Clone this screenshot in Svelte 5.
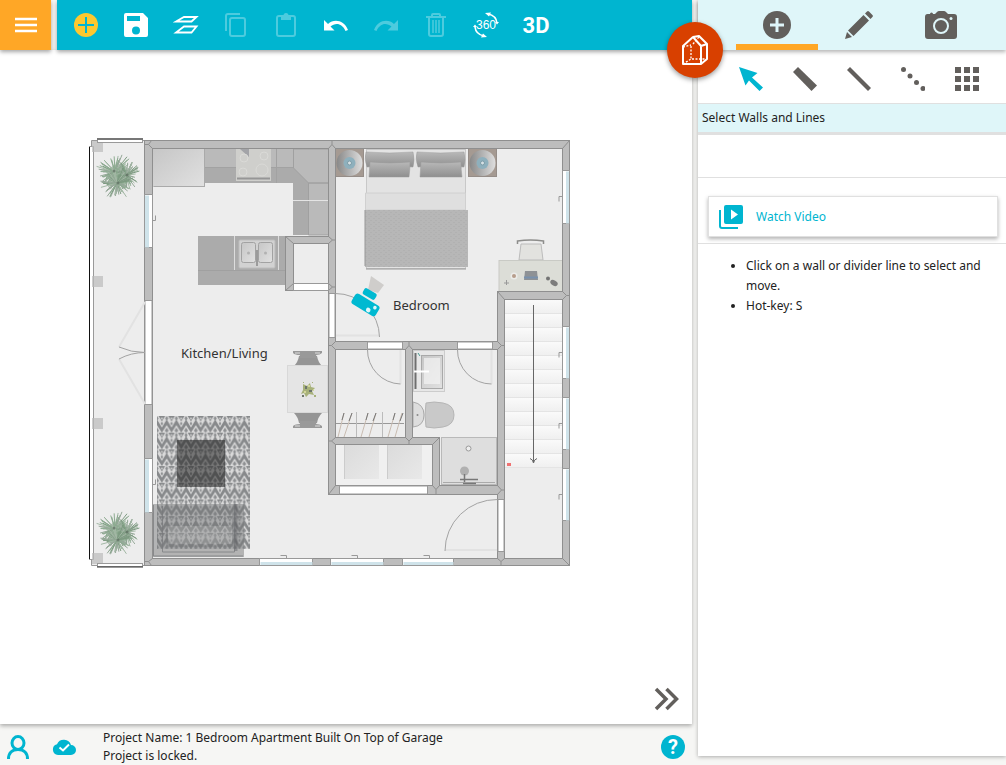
<script>
  let activeTab = $state('add');
  let activeTool = $state('select');

  const tools = [
    { id: 'select', label: 'Select Walls and Lines' },
    { id: 'wall', label: 'Draw Walls' },
    { id: 'divider', label: 'Draw Divider Lines' },
    { id: 'dots', label: 'Draw Dotted Lines' },
    { id: 'grid', label: 'Surfaces' }
  ];

  // walls as [x, y, width, height]
  const walls = [
    [144.5, 140.5, 425, 8],
    [144.5, 558.5, 425, 7],
    [144.5, 140.5, 8, 425],
    [562.5, 140.5, 7, 425],
    [328.5, 140.5, 7, 353],
    [285.5, 236.5, 50, 7],
    [285.5, 236.5, 8, 54],
    [328.5, 341.5, 176, 8],
    [405.5, 341.5, 7, 103],
    [497.5, 291.5, 72, 8],
    [497.5, 291.5, 7, 274],
    [328.5, 437.5, 111, 7],
    [432.5, 437.5, 7, 57],
    [328.5, 485.5, 176, 9]
  ];

  const openings = [
    [145, 300.5, 7, 104],
    [293.5, 283.5, 35, 7],
    [329, 293.5, 6, 44],
    [367.5, 342, 35, 7],
    [457.5, 342, 35, 7],
    [498, 499.5, 6, 52],
    [339.5, 486, 88, 8]
  ];

  const joints = [
    'M328.5 148.5l3.5-4 3.5 4M332 144.5v-4',
    'M144.5 144.5h4l4 4M148.5 144.5l3-4',
    'M144.5 561.5h4l4-3M148.5 561.5l3 4',
    'M562.5 148.5l7-8M562.5 558.5l7 7',
    'M285.5 236.5l8 7M285.5 290.5l8-7',
    'M328.5 236.5l4 3.5-4 3.5M332.5 240h3',
    'M328.5 283.5l4 3.5-4 3.5M332.5 287h3',
    'M335.5 341.5l-4 4 4 4M328.5 345.5h3',
    'M405.5 349.5l3.5-4 3.5 4M409 345.5v-4',
    'M497.5 341.5l4 4-4 4M501.5 345.5h3',
    'M497.5 291.5l7 8M562.5 291.5l4 4-4 4M566.5 295.5h3',
    'M335.5 437.5l-4 3.5 4 3.5M331.5 441h-3',
    'M405.5 437.5l3.5 3.5 3.5-3.5M409 441v3.5',
    'M432.5 444.5l7-7M328.5 494.5l7-9',
    'M432.5 485.5l3.5 4 3.5-4M436 489.5v5',
    'M497.5 485.5l4 4.5-4 4.5M501.5 490h3',
    'M497.5 558.5l3.5 3 3.5-3M501 561.5v4'
  ];

  // windows: orientation decides on which half the glass tint lies
  const windows = [
    { x: 144.5, y: 194.5, w: 8, h: 53, side: 'left' },
    { x: 144.5, y: 458.5, w: 8, h: 54, side: 'left' },
    { x: 562.5, y: 170.5, w: 7, h: 53, side: 'right' },
    { x: 562.5, y: 326.5, w: 7, h: 52, side: 'right' },
    { x: 562.5, y: 397.5, w: 7, h: 52, side: 'right' },
    { x: 562.5, y: 468.5, w: 7, h: 52, side: 'right' },
    { x: 259.5, y: 558.5, w: 53, h: 7, side: 'bottom' },
    { x: 330.5, y: 558.5, w: 53, h: 7, side: 'bottom' },
    { x: 402.5, y: 558.5, w: 51, h: 7, side: 'bottom' }
  ];

  const steps = Array.from({ length: 12 }, (_, i) => 300 + i * 14);
  const posts = [141, 276, 418, 553];
  const plants = [[118, 175], [118, 532]];
  const lamps = [335.5, 468.5];

  // repeatable pseudo random so the plants look the same on every load
  const rnd = (n) => {
    const v = Math.sin(n * 127.1) * 43758.5453;
    return v - Math.floor(v);
  };

  const leaves = [];
  [[-3, -3, 20], [8, 0, 15], [-1, 8, 17]].forEach(([cx, cy, len], c) => {
    for (let i = 0; i < 64; i++) {
      const k = c * 100 + i;
      const a = (i / 64) * Math.PI * 2 + rnd(k);
      const r = len * (0.5 + rnd(k + 500) * 0.5);
      leaves.push({
        x1: cx,
        y1: cy,
        x2: cx + Math.cos(a) * r,
        y2: cy + Math.sin(a) * r,
        tone: ['#8cab90', '#7c9a80', '#a3b8a5', '#95a898'][Math.floor(rnd(k + 900) * 4)]
      });
    }
  });
</script>

<div class="app">
  <main class="editor">
    <header class="top">
      <button class="menu" aria-label="Menu">
        <svg width="22" height="16" viewBox="0 0 22 16"><path d="M0 2h22M0 8h22M0 14h22" stroke="#fff" stroke-width="2.4" /></svg>
      </button>
      <nav class="toolbar">
        <button aria-label="Add">
          <svg width="24" height="24" viewBox="0 0 24 24"><circle cx="12" cy="12" r="12" fill="#fdc82f" /><path d="M12 4v16M4 12h16" stroke="#00b5d0" stroke-width="2" /></svg>
        </button>
        <button aria-label="Save">
          <svg width="24" height="24" viewBox="0 0 24 24"><path fill="#fff" fill-rule="evenodd" d="M2 0h17l5 5v17a2 2 0 0 1-2 2H2a2 2 0 0 1-2-2V2a2 2 0 0 1 2-2zM3 3v5h13V3zM12 13.500a4 4 0 1 0 0 8 4 4 0 0 0 0-8z" /></svg>
        </button>
        <button aria-label="Levels">
          <svg width="26" height="20" viewBox="0 0 26 20" fill="none" stroke="#fff" stroke-width="1.800"><path d="M11 2h12.500l-5 4.500H3zM11 11.500h12.500l-5 6H3z" /></svg>
        </button>
        <button aria-label="Copy" disabled>
          <svg width="24" height="24" viewBox="0 0 24 24" fill="none" stroke="#fff" stroke-width="2"><path d="M2 18V3a2 2 0 0 1 2-2h12" /><rect x="6" y="5" width="15" height="18" rx="2" /></svg>
        </button>
        <button aria-label="Paste" disabled>
          <svg width="24" height="24" viewBox="0 0 24 24" fill="none" stroke="#fff" stroke-width="2"><rect x="3" y="3" width="18" height="20" rx="2" /><path d="M8 3h8v3H8z" fill="#fff" /><circle cx="12" cy="2.500" r="1.500" /></svg>
        </button>
        <button aria-label="Undo">
          <svg width="24" height="12" viewBox="0 0 24 12"><path fill="#fff" d="M0 1v10.500h10.500L6.500 7.500C11 3.500 18 3.500 21.500 12L24 11C20 1 10-.5 4 5z" /></svg>
        </button>
        <button aria-label="Redo" disabled>
          <svg width="24" height="12" viewBox="0 0 24 12"><path fill="#fff" d="M24 1v10.500H13.500L17.500 7.500C13 3.500 6 3.500 2.500 12L0 11C4 1 14-.5 20 5z" /></svg>
        </button>
        <button aria-label="Delete" disabled>
          <svg width="20" height="24" viewBox="0 0 20 24" fill="none" stroke="#fff" stroke-width="2"><path d="M0 4h20M6 4V2q0-1 1-1h6q1 0 1 1v2M3 5v16q0 2 2 2h10q2 0 2-2V5" /><path d="M7 7v13M10 7v13M13 7v13" stroke-width="1.500" /></svg>
        </button>
        <button aria-label="Rotate view">
          <svg width="26" height="26" viewBox="0 0 26 26"><path d="M15 2c5 1 8.500 4.500 9 9M11 24c-5-1-8.500-4.500-9-9" fill="none" stroke="#fff" stroke-width="1.600" /><path d="M12 1l6-.5-2 4zM14 25l-6 .5 2-4zM22 10h4l-2 2.500zM0 15h4l-2-2.500z" fill="#fff" /><text x="13" y="17" text-anchor="middle" class="deg">360</text></svg>
        </button>
        <button class="three-d">3D</button>
      </nav>
    </header>

    <section class="canvas">
      <svg class="plan" width="484" height="430" viewBox="88 138 484 430" role="img" aria-label="Floor plan">
        <defs>
          <pattern id="ikat" x="157" y="416" width="9.700" height="16.700" patternUnits="userSpaceOnUse">
            <rect width="9.700" height="16.700" fill="#dadada" />
            <path d="M0 3.500l4.850 8 4.850-8V9l-4.850 7.700L0 9z" fill="#87898b" />
            <path d="M1.600 0h6.500L4.850 5.500z" fill="#87898b" />
            <path d="M0 0l1.600 2.500L0 5zM9.700 0L8.100 2.500l1.600 2.500zM4.850 5.500l1.200 2-1.200 2-1.200-2zM0 11.500l2 3.200-2 2zM9.700 11.500l-2 3.200 2 2z" fill="#8e9092" />
            <path d="M4.850 1l.8 1.500-.8 1.500-.8-1.500z" fill="#dadada" />
          </pattern>
          <pattern id="weave" width="5" height="4" patternUnits="userSpaceOnUse">
            <rect width="5" height="4" fill="#b7b7b7" />
            <path d="M0 .5h2M3 2.500h2" stroke="#b1b1b1" />
          </pattern>
          <linearGradient id="step" x2="0" y2="1">
            <stop offset="0" stop-color="#fafafa" />
            <stop offset="1" stop-color="#efefef" />
          </linearGradient>
          <linearGradient id="metal" x2="1" y2="1">
            <stop offset="0" stop-color="#c6c6c6" />
            <stop offset="1" stop-color="#e1e1e1" />
          </linearGradient>
          <linearGradient id="pillow" x2="0" y2="1">
            <stop offset="0" stop-color="#b8b8b8" />
            <stop offset="1" stop-color="#8f8f8f" />
          </linearGradient>
          <linearGradient id="shade">
            <stop offset="0" stop-color="#888" />
            <stop offset="1" stop-color="#dedede" />
          </linearGradient>
        </defs>

        <!-- floor and balcony -->
        <path d="M91.500 140.500h478v425h-478v-6h2v-413h-2z" fill="#ededed" stroke="#999" />
        <path d="M89.500 147v412" stroke="#111" />
        <path d="M89 146.500h4M89 559.500h4" stroke="#999" />
        {#each posts as y (y)}
          <rect x="92" {y} width="11" height="11" fill="#bbb" opacity="0.700" />
        {/each}
        <rect x="97.500" y="138.500" width="45" height="4" fill="#fff" stroke="#999" />
        <path d="M97 139h46" stroke="#777" stroke-width="2" />
        <rect x="97.500" y="563.500" width="45" height="3" fill="#fff" stroke="#999" />
        <path d="M97 567h46" stroke="#333" />
        {#each plants as [x, y] (y)}
          <g transform="translate({x} {y})">
            <circle cx="1" cy="0" r="11" fill="#93aa95" opacity="0.7" />
            {#each leaves as leaf}
              <line x1={leaf.x1} y1={leaf.y1} x2={leaf.x2} y2={leaf.y2} stroke={leaf.tone} stroke-width="1" />
            {/each}
            <g fill="#5d6d60" opacity="0.700">
              <circle cx="-4" cy="-4" r="1.500" />
              <circle cx="9" cy="0" r="1.500" />
              <circle cx="0" cy="8" r="1.500" />
            </g>
          </g>
        {/each}

        <!-- kitchen -->
        <rect x="153" y="149" width="52" height="38" fill="url(#metal)" />
        <path d="M153.500 186.500h51M204.500 149v38" fill="none" stroke="#aaa" />
        <path d="M205 149h88v34h-88z" fill="#ababab" />
        <path d="M205 149h88v18h-88z" fill="#bababa" />
        <path d="M205 167.500h88M276.500 149v34" stroke="#a2a2a2" />
        <rect x="236" y="149" width="35" height="32" fill="#cfcfcc" />
        <path d="M240 149h9v8z" fill="#a3a4a8" />
        <path d="M237 178.500h33" stroke="#969696" stroke-width="2" />
        <g fill="none" stroke="#dadad7">
          <circle cx="244" cy="158" r="4" />
          <circle cx="264" cy="156" r="4" />
          <circle cx="243" cy="172" r="4" />
          <circle cx="262" cy="170" r="6" />
        </g>
        <path d="M293 149h35v86h-35z" fill="#ababab" />
        <path d="M308.500 183h20v52h-20zM293.500 149h35v34h-20l-15-15z" fill="#bababa" stroke="#a0a0a0" />
        <path d="M293 200.500h35" stroke="#e4e4e4" />
        <path d="M198 236h88v49h-88z" fill="#ababab" />
        <path d="M198 270.500h88" stroke="#a0a0a0" />
        <path d="M234.500 236v34M278.500 236v34" stroke="#ddd" />
        <rect x="239" y="240" width="36" height="28" rx="1" fill="#d2d2d2" stroke="#bdbdbd" />
        <rect x="241.500" y="242.500" width="14" height="20" rx="2" fill="url(#metal)" stroke="#a2a2a2" />
        <rect x="258.500" y="242.500" width="14" height="20" rx="2" fill="url(#metal)" stroke="#a2a2a2" />
        <path d="M257 250v16" stroke="#888" stroke-width="1.500" />
        <circle cx="248.500" cy="253" r="1.500" fill="#b2b2b2" />
        <circle cx="265.500" cy="253" r="1.500" fill="#b2b2b2" />

        <!-- dining table -->
        <g id="chair">
          <path d="M294 366q4-4 5-10h18q1 6 5 10z" fill="#959595" />
          <path d="M293 351h29v2q-2 2-6 2l1 3h-18l1-3q-5 0-7-2z" fill="#999" />
          <path d="M295 353h5M315 353h5" stroke="#ddd" />
        </g>
        <use href="#chair" transform="matrix(1 0 0 -1 0 779)" />
        <rect x="287.500" y="365.500" width="40" height="47" fill="#e5e5e5" stroke="#d8d8d8" />
        <g fill="#a7b17a">
          <path d="M303 384l4 2 3-3 1 4 4 1-3 3 2 4-5-1-3 3-2-4-3 1 2-4z" />
          <path d="M305 386h2v3h-2zM309 390h3v2h-3zM302 395h2v2h-2z" fill="#6d756c" />
          <path d="M308 385h2v2h-2zM304 391h2v2h-2zM313 389h1v2h-1z" fill="#d3d69a" />
          <path d="M312 382h1v1h-1zM303 382h1v1h-1zM314 395h2v2h-2z" />
        </g>

        <!-- living area -->
        <rect x="157" y="416" width="93" height="133" fill="url(#ikat)" />
        <rect x="177" y="440" width="48" height="47" fill="#222" opacity="0.550" />
        <g opacity="0.850">
          <path d="M153 504h91v53h-91z" fill="#737477" opacity="0.550" />
          <path d="M153 549h91v8h-91z" fill="#a9a9a9" />
          <path d="M153.500 505v51h89.500M162.500 506v46h72v-46M167 508v38h66v-38" fill="none" stroke="#77787b" />
          <path d="M168 526h64v18h-64z" fill="#c2c2c2" opacity="0.300" />
          <path d="M236 504v47" stroke="#55565a" stroke-width="3" opacity="0.500" />
        </g>

        <!-- bedroom -->
        {#each lamps as x (x)}
          <rect {x} y="148.500" width="28" height="28" fill="#a59a92" stroke="#958d88" />
          <circle cx={x + 14} cy="163" r="13" fill="url(#shade)" />
          <circle cx={x + 14} cy="163" r="6" fill="#8eb0bd" />
          <circle cx={x + 14} cy="163" r="2" fill="#d6e1e5" stroke="#7d9ca7" />
        {/each}
        <rect x="366.500" y="149.500" width="99" height="119" fill="#e3e3e3" stroke="#c8c8c8" />
        <g stroke="#9b9b9b" stroke-width="0.500" fill="url(#pillow)">
          <path d="M366 152q24 2 47 0 2 8 0 15-23-2-46 0-3-8-1-15z" />
          <path d="M417 152q24 2 47 0 2 8 0 15-23-2-46 0-3-8-1-15z" />
          <path d="M370 162q20 2 40 0 0 8-1 15h-40zM421 162q20 2 40 0 0 8 1 15h-42z" />
        </g>
        <path d="M365.500 193h100v17h-100z" fill="#dfdfdf" stroke="#d0d0d0" />
        <rect x="365" y="210" width="103" height="57" fill="url(#weave)" />
        <path d="M365 210v56M366 269h100" stroke="#979797" />
        <path d="M519 260l2-16h20l2 16z" fill="#e2e2df" stroke="#bbb" />
        <path d="M517.500 244v-3q13-2 26 0v3" fill="none" stroke="#8d8d8b" stroke-width="1.500" />
        <rect x="499" y="260.500" width="64" height="31" fill="#dcddd7" stroke="#c9cac5" />
        <circle cx="514" cy="276" r="3.500" fill="#ececea" />
        <circle cx="514" cy="276" r="2" fill="#b79e8c" />
        <path d="M525 271h12l1 9h-14z" fill="#8e9195" />
        <path d="M524 277.500h14" stroke="#7890ad" stroke-width="2" />
        <path d="M504 283h5M506.500 280v5" stroke="#999" />
        <circle cx="548" cy="278.500" r="2" fill="#747474" />
        <ellipse cx="554" cy="283" rx="4" ry="2.500" fill="#7c7c7c" transform="rotate(30 554 283)" />

        <!-- bathroom -->
        <rect x="413.500" y="350.500" width="31" height="41" fill="#e7e7e7" stroke="#ccc" />
        <rect x="421.500" y="355.500" width="21" height="33" fill="url(#metal)" stroke="#a9a9a9" />
        <rect x="424" y="358" width="16" height="26" fill="#f4f4f4" opacity="0.700" />
        <path d="M415.500 353v36" stroke="#6f6f6f" stroke-width="2" />
        <path d="M414 371.500h15" stroke="#fff" stroke-width="2" />
        <path d="M418 353l2 3" stroke="#4a9b93" />
        <path d="M413 402q11 2 11 13t-11 12z" fill="#ddd" stroke="#aaa" />
        <path d="M426 403q8-2 17 0 11 2 11 12t-11 12q-9 2-17 0-2-12 0-24z" fill="#c9c9c9" stroke="#b5b5b5" />
        <circle cx="417.500" cy="415" r="1" fill="#888" />
        <rect x="441.500" y="437.500" width="55" height="47" fill="#dedede" stroke="#b9b9b9" />
        <path d="M443 482.500h52" stroke="#aaa" />
        <circle cx="468.500" cy="448.500" r="2.500" fill="#eee" stroke="#9a9a9a" />
        <circle cx="464.500" cy="471" r="4.500" fill="#b0b0b0" />
        <path d="M464.500 474v8M460 479.500h18M463 483.500h13" stroke="#777" stroke-width="1.500" />

        <!-- closet -->
        <path d="M336 423.500h68" stroke="#999" />
        <path d="M338 437l6-24M344 437l8-24M361 437l7-24M369 437l7-24M388 437l7-24M395 437l7-24" stroke="#c9bcb1" />
        <path d="M342 420l2-7M349 421l3-8M366 420l2-7M373 421l3-8M393 420l2-7M400 421l3-8" stroke="#777" />
        <path d="M356.500 412v25M382.500 412v25" stroke="#bbb" />
        <rect x="336" y="445" width="96" height="40" fill="#f0f0f0" />
        <rect x="344" y="445" width="35" height="34" fill="url(#metal)" opacity="0.500" />
        <rect x="387" y="445" width="35" height="34" fill="url(#metal)" opacity="0.500" />
        <path d="M344.500 445v34M387.500 445v34" stroke="#ccc" />

        <!-- stairs -->
        {#each steps as y (y)}
          <rect x="505" {y} width="57" height="14" fill="url(#step)" />
          <path d="M505 {y + 13.5}h57" stroke="#e4e4e4" />
        {/each}
        <path d="M533.500 305v157M530 458.500q3 1 3.500 4.500 .5-3.500 3.500-4.500" fill="none" stroke="#666" />
        <rect x="507" y="463" width="4" height="3" fill="#f07272" />

        <!-- walls -->
        <g fill="#bdbdbd" stroke="#8f8f8f">
          {#each walls as [x, y, width, height]}
            <rect {x} {y} {width} {height} />
          {/each}
        </g>
        <!-- same walls again without outline, so crossings stay open -->
        <g fill="#bdbdbd">
          {#each walls as [x, y, w, h]}
            <rect x={x + 0.5} y={y + 0.5} width={w - 1} height={h - 1} />
          {/each}
        </g>
        <g fill="none" stroke="#8f8f8f">
          {#each joints as d}
            <path {d} />
          {/each}
        </g>
        <g fill="#fff" stroke="#999">
          {#each openings as [x, y, width, height]}
            <rect {x} {y} {width} {height} />
          {/each}
        </g>
        {#each windows as win}
          <rect x={win.x} y={win.y} width={win.w} height={win.h} fill="#fff" stroke="#999" />
          {#if win.side === 'left'}
            <rect x="145" y={win.y + 1} width="4" height={win.h - 1} fill="#cfe3ea" />
            <path d="M153 {win.y + 26}h2.500v-5" fill="none" stroke="#999" />
          {:else if win.side === 'right'}
            <rect x="566" y={win.y + 1} width="3" height={win.h - 1} fill="#cfe3ea" />
            <path d="M562 {win.y + 26}h-3v5" fill="none" stroke="#999" />
          {:else}
            <rect x={win.x + 1} y="562" width={win.w - 1} height="3" fill="#cfe3ea" />
            <path d="M{win.x + 21} 555.500h6v3" fill="none" stroke="#999" />
          {/if}
        {/each}

        <!-- door swings -->
        <g fill="none" stroke="#e2e2e2" stroke-width="2">
          <path d="M336 335.500h43M400.500 350v34M491.500 350v34M445 550h52M145 302l-26 45M145 404l-26-45" />
        </g>
        <g fill="none" stroke="#a3a3a3">
          <path d="M335.500 293.500a44 44 0 0 1 44 43.500M367.500 349.500a34 34 0 0 0 33 34.500M457.500 349.500a34 34 0 0 0 34 34.500M497.500 499.500a52 52 0 0 0-52.500 51.500" />
          <path d="M119 347q12 5.500 26 5.500M119 359q12-6.500 26-6.500" />
        </g>

        <!-- camera marker -->
        <path d="M371 276l13 9-6 8-10-3z" fill="#cfcdcb" />
        <g transform="rotate(31 366 304)" fill="#00b9d1">
          <rect x="352" y="299" width="28" height="12" rx="3" />
          <rect x="357" y="290" width="14" height="7" rx="2" />
          <circle cx="371" cy="308" r="2.300" fill="#dff6f9" />
          <circle cx="375.500" cy="302.500" r="1.800" fill="#dff6f9" />
        </g>

        <text x="181" y="358" class="room">Kitchen/Living</text>
        <text x="393" y="310" class="room">Bedroom</text>
      </svg>

      <button class="expand" aria-label="Hide panel">
        <svg width="26" height="24" viewBox="0 0 26 24" fill="none" stroke="#625f5c" stroke-width="3.500"><path d="M2 2l10 10L2 22M12.500 2l10 10-10 10" /></svg>
      </button>
    </section>

    <footer class="status">
      <button aria-label="Account">
        <svg width="22" height="24" viewBox="0 0 22 24" fill="none" stroke="#00b5d0" stroke-width="3"><ellipse cx="11" cy="8" rx="6" ry="6.500" /><path d="M1.500 24c0-6 3.500-9.500 9.500-9.500s9.500 3.500 9.500 9.500" /></svg>
      </button>
      <button class="cloud" aria-label="Saved">
        <svg width="24" height="16" viewBox="0 0 24 16"><path fill="#00b5d0" d="M6 16a5.500 5.500 0 0 1-1-10.800A7.500 7.500 0 0 1 19 6a5 5 0 0 1 0 10z" /><path d="M7.500 8.500l3.500 3 6-6" fill="none" stroke="#fff" stroke-width="2" /></svg>
      </button>
      <p>Project Name: 1 Bedroom Apartment Built On Top of Garage<br />Project is locked.</p>
      <button class="help" aria-label="Help">?</button>
    </footer>
  </main>

  <aside class="panel">
    <button class="house" aria-label="Home view">
      <svg width="28" height="32" viewBox="0 0 28 32" fill="none" stroke="#fff" stroke-width="2" stroke-linejoin="round">
        <path d="M2 30V12L12 3l8 9v18zM20 30l6-5V10l-8-8-6 1M20 12l6-2" />
        <path d="M10 12v13h15M2 30l8-5M2 13l8-2M12 10l6-7" stroke-width="1.300" stroke-dasharray="2 1.500" />
      </svg>
    </button>

    <div class="tabs" role="tablist">
      <button role="tab" aria-label="Build" aria-selected={activeTab === 'add'} class:active={activeTab === 'add'} onclick={() => (activeTab = 'add')}>
        <svg width="28" height="28" viewBox="0 0 28 28"><circle cx="14" cy="14" r="14" fill="#625f5c" /><path d="M14 7v14M7 14h14" stroke="#dff6f9" stroke-width="3" /></svg>
      </button>
      <button role="tab" aria-label="Edit" aria-selected={activeTab === 'edit'} class:active={activeTab === 'edit'} onclick={() => (activeTab = 'edit')}>
        <svg width="28" height="28" viewBox="0 0 28 28" fill="#625f5c"><path d="M0 28l2-7 5 5zM3 19.500L18.500 4l5.500 5.500L8.500 25zM20 2.500L22 .6q1-1 2 0L27.400 4q1 1 0 2L25.500 8z" /></svg>
      </button>
      <button role="tab" aria-label="Camera" aria-selected={activeTab === 'camera'} class:active={activeTab === 'camera'} onclick={() => (activeTab = 'camera')}>
        <svg width="32" height="28" viewBox="0 0 32 28"><path fill="#625f5c" d="M2.500 3H5q0-1.500 1.500-1.500T8 3h2l2-2q1-1 2-1h5q1 0 2 1l2 2h6q3 0 3 3v19q0 3-3 3H3q-3 0-3-3V6q0-3 2.500-3z" /><circle cx="16" cy="15" r="7" fill="none" stroke="#dff6f9" stroke-width="2" /><circle cx="26" cy="7.500" r="1.500" fill="#dff6f9" /></svg>
      </button>
    </div>

    <div class="tools">
      {#each tools as tool (tool.id)}
        <button aria-label={tool.label} class:active={activeTool === tool.id} onclick={() => (activeTool = tool.id)}>
          <svg width="24" height="24" viewBox="0 0 24 24" fill="currentColor">
            {#if tool.id === 'select'}
              <path d="M0 0l18.500 6-5.500 4.500L24 20.500 20.500 24 10 13.500 6.500 18.500z" />
            {:else if tool.id === 'wall'}
              <path d="M5 0l19 18.500-5.500 5.500L0 5z" />
            {:else if tool.id === 'divider'}
              <path d="M3 0l21 21-3 3L0 3z" />
            {:else if tool.id === 'dots'}
              <circle cx="2.500" cy="2.500" r="2.500" /><circle cx="9" cy="9" r="2.500" /><circle cx="15.500" cy="15.500" r="2.500" /><circle cx="22" cy="21.500" r="2.500" />
            {:else}
              <path d="M0 0h6v6H0zM9 0h6v6H9zM18 0h6v6h-6zM0 9h6v6H0zM9 9h6v6H9zM18 9h6v6h-6zM0 18h6v6H0zM9 18h6v6H9zM18 18h6v6h-6z" />
            {/if}
          </svg>
        </button>
      {/each}
    </div>

    <h2>Select Walls and Lines</h2>

    <div class="video">
      <a href="#video">
        <svg width="24" height="24" viewBox="0 0 24 24"><path fill="#00b5d0" fill-rule="evenodd" d="M7 0h15a2 2 0 0 1 2 2v15a2 2 0 0 1-2 2H7a2 2 0 0 1-2-2V2a2 2 0 0 1 2-2zM12 4.500v10l7-5z" /><path d="M1 5v16q0 2 2 2h16" fill="none" stroke="#00b5d0" stroke-width="2" /></svg>
        Watch Video
      </a>
    </div>

    <ul>
      <li>Click on a wall or divider line to select and move.</li>
      <li>Hot-key: S</li>
    </ul>
  </aside>
</div>

<style>
  :global(body) {
    margin: 0;
    background: #f6f6f4;
  }

  .app {
    display: flex;
    gap: 6px;
    height: 100vh;
    font-family: "Noto Sans", sans-serif;
    font-size: 12px;
    color: #222;
    overflow: hidden;
  }

  button {
    display: flex;
    align-items: center;
    justify-content: center;
    padding: 0;
    border: 0;
    background: none;
    font: inherit;
    cursor: pointer;
  }

  button:disabled {
    opacity: 0.3;
    cursor: default;
  }

  svg {
    display: block;
    flex: none;
  }

  .editor {
    flex: 1;
    min-width: 0;
    display: flex;
    flex-direction: column;
  }

  .top {
    display: flex;
    gap: 6px;
    height: 50px;
    z-index: 1;
  }

  .menu {
    width: 51px;
    background: #ffa726;
    box-shadow: 0 2px 4px rgba(0, 0, 0, 0.35);
  }

  .toolbar {
    flex: 1;
    display: flex;
    padding-left: 4px;
    background: #00b5d0;
    box-shadow: 0 2px 4px rgba(0, 0, 0, 0.35);
  }

  .toolbar button {
    width: 50px;
    height: 50px;
  }

  .toolbar .three-d {
    color: #fff;
    font: bold 22px Roboto, sans-serif;
  }

  .deg {
    font: 12px "Liberation Sans", sans-serif;
    fill: #fff;
  }

  .canvas {
    flex: 1;
    min-height: 0;
    display: flex;
    justify-content: space-between;
    align-items: flex-start;
    padding: 88px 12px 0 88px;
    background: #fff;
    box-shadow: 0 2px 4px rgba(0, 0, 0, 0.3);
  }

  .expand {
    align-self: flex-end;
    margin-bottom: 13px;
  }

  .room {
    font: 13px "Noto Sans", sans-serif;
    fill: #333;
  }

  .status {
    display: flex;
    align-items: center;
    height: 41px;
    padding: 0 7px;
  }

  .status button {
    margin-top: 4px;
  }

  .status .cloud {
    margin-left: 23px;
  }

  .status p {
    flex: 1;
    margin: 4px 0 0 27px;
    line-height: 18px;
  }

  .status .help {
    width: 24px;
    height: 24px;
    border-radius: 50%;
    background: #00b5d0;
    color: #fff;
    font: bold 20px Roboto, sans-serif;
  }

  .panel {
    position: relative;
    z-index: 2;
    width: 308px;
    margin-bottom: 9px;
    background: #fff;
    box-shadow: 0 1px 4px rgba(0, 0, 0, 0.3);
  }

  /* round button sits on the seam between the drawing and the panel */
  .house {
    position: absolute;
    top: 22px;
    left: -31px;
    width: 56px;
    height: 56px;
    border-radius: 50%;
    background: #d84000;
    box-shadow: 0 2px 5px rgba(0, 0, 0, 0.4);
  }

  .tabs {
    display: flex;
    height: 50px;
    padding-left: 38px;
    background: #dff6f9;
    box-shadow: 0 2px 4px rgba(0, 0, 0, 0.3);
  }

  .tabs button {
    width: 82px;
    border: solid transparent;
    border-width: 6px 0;
  }

  .tabs .active {
    border-bottom-color: #ffa726;
  }

  .tools {
    display: flex;
    height: 53px;
    padding-left: 26px;
    border-bottom: 1px solid #e0e0e0;
  }

  .tools button {
    width: 54px;
    padding-top: 4px;
    color: #625f5c;
  }

  .tools .active {
    color: #00b5d0;
  }

  h2 {
    margin: 0;
    padding: 0 4px;
    border-bottom: 3px solid #e0e0e0;
    background: #dff6f9;
    font-size: 12px;
    font-weight: normal;
    line-height: 28px;
  }

  .video {
    margin-top: 42px;
    padding: 18px 8px 6px 10px;
    border: solid #e0e0e0;
    border-width: 1px 0;
  }

  .video a {
    display: flex;
    align-items: center;
    gap: 13px;
    height: 39px;
    padding-left: 10px;
    border: 1px solid #e0e0e0;
    box-shadow: 0 2px 4px rgba(0, 0, 0, 0.3);
    color: #00b5d0;
    text-decoration: none;
  }

  ul {
    margin: 12px 0;
    padding: 0 10px 0 48px;
    line-height: 20px;
  }
</style>
